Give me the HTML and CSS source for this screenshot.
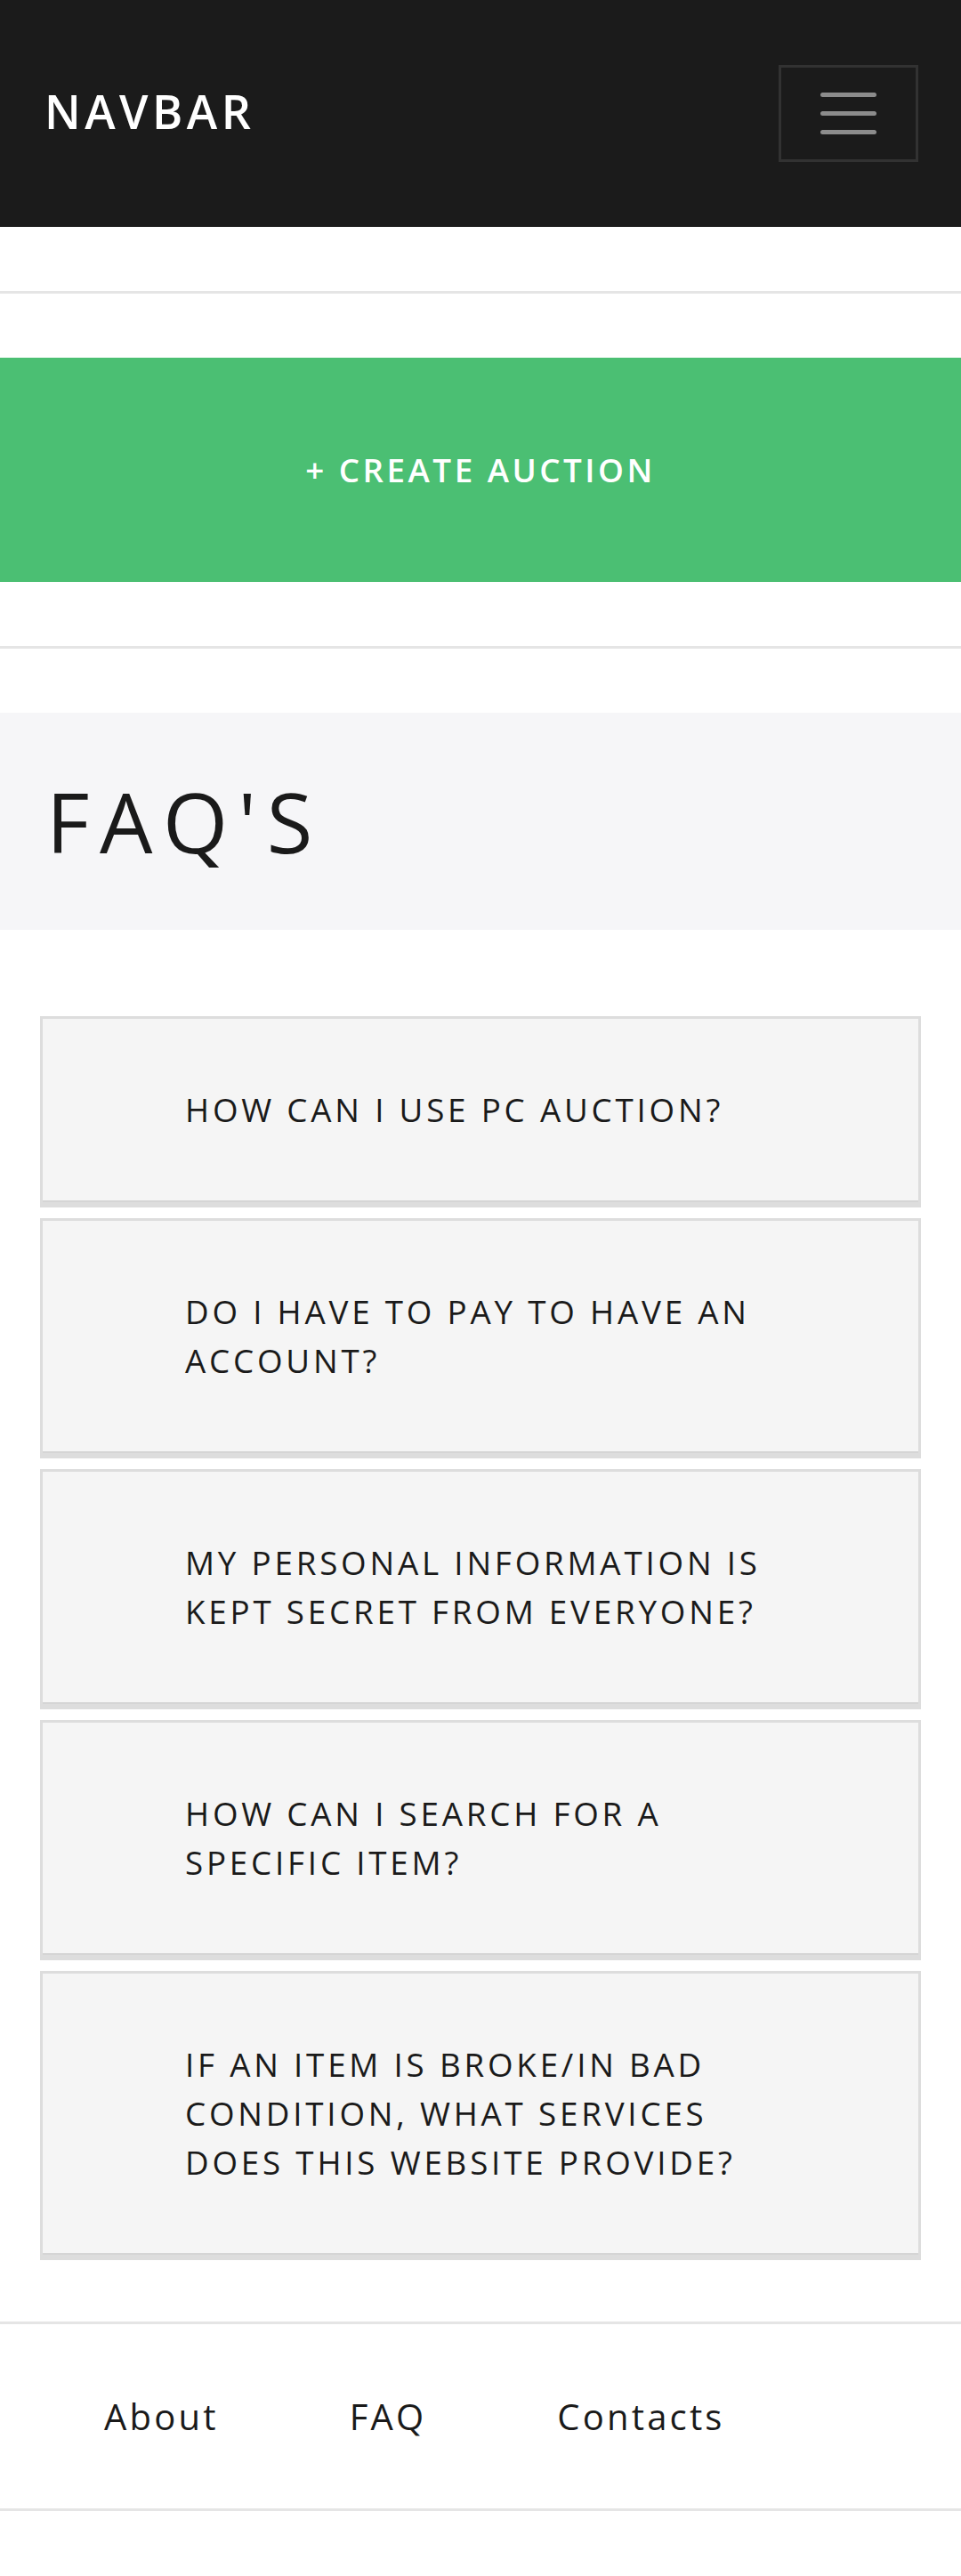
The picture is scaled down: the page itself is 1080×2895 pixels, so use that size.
FILE: index.html
```html
<!DOCTYPE html>
<html lang="en">
<head>
<meta charset="utf-8">
<title>FAQ's</title>
<link rel="stylesheet" href="styles.css">
</head>
<body>
<nav class="navbar">
  <span class="brand">NAVBAR</span>
  <button class="toggler" aria-label="Toggle navigation">
    <span class="bar"></span>
    <span class="bar"></span>
    <span class="bar"></span>
  </button>
</nav>
<hr class="rule">
<a class="create" href="#">+ CREATE AUCTION</a>
<hr class="rule">
<section class="faq-head">
  <h1 class="faq-title">FAQ'S</h1>
</section>
<div class="faq-list">
  <div class="faq-item">HOW CAN I USE PC AUCTION?</div>
  <div class="faq-item">DO I HAVE TO PAY TO HAVE AN ACCOUNT?</div>
  <div class="faq-item">MY PERSONAL INFORMATION IS KEPT SECRET FROM EVERYONE?</div>
  <div class="faq-item">HOW CAN I SEARCH FOR A SPECIFIC ITEM?</div>
  <div class="faq-item">IF AN ITEM IS BROKE/IN BAD CONDITION, WHAT SERVICES DOES THIS WEBSITE PROVIDE?</div>
</div>
<hr class="rule rule-footer">
<footer class="footer">
  <a class="footer-link" href="#">About</a>
  <a class="footer-link" href="#">FAQ</a>
  <a class="footer-link" href="#">Contacts</a>
</footer>
<hr class="rule rule-end">
</body>
</html>
```
FILE: styles.css
```css
* { box-sizing: border-box; }
html, body { margin: 0; padding: 0; }
body {
  background: #ffffff;
  color: #1a1a1a;
  font-family: "Open Sans", "Noto Sans", sans-serif;
  width: 1080px;
}
.navbar {
  height: 255px;
  background: #1b1b1b;
  display: flex;
  align-items: center;
  justify-content: space-between;
  padding: 0 48px 0 50px;
}
.brand {
  color: #ffffff;
  font-size: 52px;
  font-weight: 600;
  letter-spacing: 4.5px;
  line-height: 1;
  margin-top: -5px;
}
.toggler {
  width: 157px;
  height: 109px;
  background: transparent;
  border: 3px solid #323232;
  border-radius: 0;
  display: flex;
  flex-direction: column;
  align-items: center;
  justify-content: center;
  gap: 16px;
  padding: 0;
}
.bar {
  display: block;
  width: 63px;
  height: 5px;
  border-radius: 3px;
  background: #8c8c8c;
}
.rule {
  border: 0;
  height: 3px;
  background: #e5e5e5;
  margin: 72px 0;
}
.create {
  display: flex;
  align-items: center;
  justify-content: center;
  height: 252px;
  background: #4bbf73;
  color: #ffffff;
  text-decoration: none;
  font-size: 36.75px;
  font-weight: 600;
  letter-spacing: 3.5px;
}
.faq-head {
  background: #f6f6f8;
  height: 244px;
  display: flex;
  align-items: center;
  padding: 0 52px;
}
.faq-title {
  margin: 0;
  font-size: 94px;
  font-weight: 400;
  letter-spacing: 11.5px;
  line-height: 1;
  color: #1a1a1a;
}
.faq-list {
  display: flex;
  flex-direction: column;
  gap: 12px;
  padding: 97px 45px 0;
}
.faq-item {
  background: #f5f5f5;
  border: 3px solid #dddddd;
  box-shadow: inset 0 -2px 0 #d5d5d5, 0 3px 0 #dddddd;
  padding: 75px 150px 76px 160px;
  font-size: 36.75px;
  line-height: 55px;
  letter-spacing: 3.8px;
  color: #1a1a1a;
  margin-bottom: 3px;
}
.rule-footer { margin-top: 69px; margin-bottom: 0; }
.footer {
  height: 207px;
  display: flex;
  align-items: center;
  gap: 147px;
  padding: 0 0 0 117px;
}
.footer-link {
  color: #1a1a1a;
  text-decoration: none;
  font-size: 40px;
  letter-spacing: 3.2px;
}
.rule-end { margin: 0; }
```
